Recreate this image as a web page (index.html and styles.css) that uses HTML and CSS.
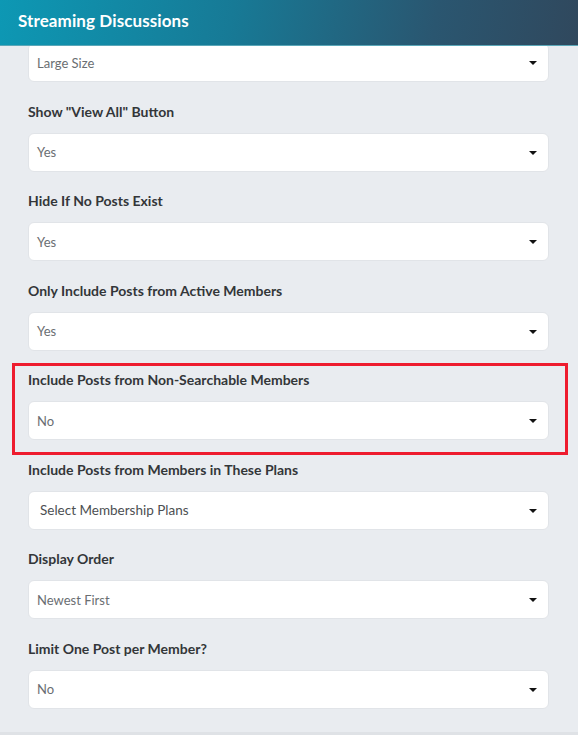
FILE: index.html
```html
<!DOCTYPE html>
<html>
<head>
<meta charset="utf-8">
<link rel="stylesheet" href="styles.css">
</head>
<body>
<div class="panel">
  <header class="header"><h1 class="title">Streaming Discussions</h1></header>
  <div class="scroll">
    <div class="list">
      <div class="field">
        <div class="select"><span class="value">Large Size</span><span class="caret"></span></div>
      </div>
      <div class="field">
        <label class="label">Show "View All" Button</label>
        <div class="select"><span class="value">Yes</span><span class="caret"></span></div>
      </div>
      <div class="field">
        <label class="label">Hide If No Posts Exist</label>
        <div class="select"><span class="value">Yes</span><span class="caret"></span></div>
      </div>
      <div class="field">
        <label class="label">Only Include Posts from Active Members</label>
        <div class="select"><span class="value">Yes</span><span class="caret"></span></div>
      </div>
      <div class="field highlighted">
        <label class="label">Include Posts from Non-Searchable Members</label>
        <div class="select"><span class="value">No</span><span class="caret"></span></div>
      </div>
      <div class="field">
        <label class="label">Include Posts from Members in These Plans</label>
        <div class="select multi"><span class="value">Select Membership Plans</span><span class="caret"></span></div>
      </div>
      <div class="field">
        <label class="label">Display Order</label>
        <div class="select"><span class="value">Newest First</span><span class="caret"></span></div>
      </div>
      <div class="field">
        <label class="label">Limit One Post per Member?</label>
        <div class="select"><span class="value">No</span><span class="caret"></span></div>
      </div>
    </div>
  </div>
</div>
</body>
</html>
```
FILE: styles.css
```css
* { box-sizing: border-box; }
html, body { margin: 0; padding: 0; }
body {
  background: #e9ecf0;
  font-family: "Lato", "Open Sans", sans-serif;
  width: 578px;
  height: 735px;
  overflow: hidden;
}
.panel {
  display: flex;
  flex-direction: column;
  height: 735px;
}
.header {
  height: 46px;
  flex: none;
  background: linear-gradient(100deg, #0d98b4 0%, #177a96 40%, #2a5670 75%, #30485d 100%);
  border-bottom: 1px solid #5aa7b8;
  display: flex;
  align-items: center;
  padding-left: 18px;
  position: relative;
  z-index: 2;
}
.title {
  margin: 0;
  color: #ffffff;
  font-size: 17px;
  font-weight: 700;
  letter-spacing: 0.1px;
  padding-bottom: 4px;
}
.scroll {
  flex: 1;
  overflow: hidden;
  border-bottom: 3px solid #dfe2e6;
}
.list {
  margin-top: -3px;
  padding: 0 29px 0 28px;
  display: flex;
  flex-direction: column;
}
.field {
  display: flex;
  flex-direction: column;
  padding-bottom: 19.5px;
}
.label {
  display: block;
  height: 20px;
  line-height: 20px;
  margin-top: 0;
  margin-bottom: 11px;
  font-size: 14px;
  font-weight: 700;
  color: #333639;
}
.select {
  height: 39px;
  background: #ffffff;
  border: 1px solid #e1e4e8;
  border-radius: 6px;
  display: flex;
  align-items: center;
  justify-content: space-between;
  padding: 0 11px 0 8px;
}
.value {
  font-size: 13px;
  color: #6a6e72;
}
.select.multi { padding-left: 11px; }
.select.multi .value { font-size: 13.5px; color: #4c4f52; }
.caret {
  width: 0;
  height: 0;
  border-left: 4px solid transparent;
  border-right: 4px solid transparent;
  border-top: 4.5px solid #111;
  margin-top: 1px;
}
.highlighted { position: relative; }
.highlighted::after {
  content: "";
  position: absolute;
  left: -16px;
  right: -19px;
  top: -7px;
  bottom: 4.5px;
  border: 3.5px solid #ee1c2e;
  pointer-events: none;
}
```
